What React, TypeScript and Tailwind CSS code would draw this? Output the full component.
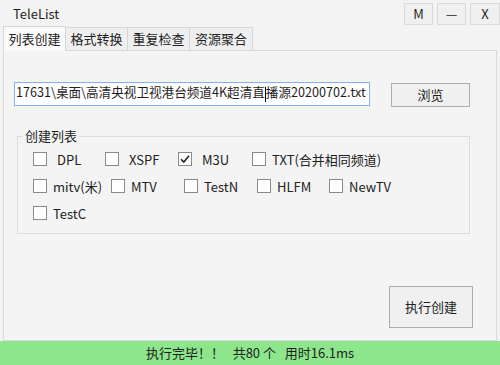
import React from 'react';

const font = { fontFamily: '"Noto Sans CJK SC", "Noto Sans", sans-serif' };

function Box({ checked }: { checked?: boolean }) {
  return (
    <span className="w-[14px] h-[14px] border border-[#8a8a8a] bg-white flex items-center justify-center shrink-0">
      {checked && (
        <svg width="12" height="12" viewBox="0 0 12 12">
          <path d="M2 6.2 L4.8 9 L10 2.8" fill="none" stroke="#222" strokeWidth="1.6" />
        </svg>
      )}
    </span>
  );
}

function Check({ label, w, gap, checked }: { label: string; w: string; gap: string; checked?: boolean }) {
  return (
    <div className={`flex items-center ${w} ${gap}`}>
      <Box checked={checked} />
      <span className="text-[13px] leading-none text-[#222] whitespace-nowrap">{label}</span>
    </div>
  );
}

export default function App() {
  return (
    <div className="w-[500px] h-[365px] bg-[#f3f3f3] flex flex-col overflow-hidden text-[#1e1e1e]" style={font}>
      {/* Title bar */}
      <div className="h-[26px] flex items-start justify-between">
        <span className="pl-[13px] pt-[4px] text-[13px]">TeleList</span>
        <div className="flex gap-[4px] pt-[3px]">
          <div className="w-[29px] h-[22px] border border-[#dadada] bg-[#f0f0f0] flex items-center justify-center text-[13px]">M</div>
          <div className="w-[29px] h-[22px] border border-[#dadada] bg-[#f0f0f0] flex items-center justify-center text-[13px]">—</div>
          <div className="w-[30px] h-[22px] border border-[#dadada] bg-[#f0f0f0] flex items-center justify-center text-[13px]">X</div>
        </div>
      </div>

      {/* Tabs */}
      <div className="flex items-end h-[24px] pl-[3px] relative z-10">
        <div className="w-[63px] h-[25px] bg-[#fafafa] border border-b-0 border-[#d6d6d6] flex items-center justify-center text-[13px] -mb-px">列表创建</div>
        <div className="w-[62px] h-[23px] bg-[#efefef] border border-l-0 border-b-0 border-[#d6d6d6] flex items-center justify-center text-[13px]">格式转换</div>
        <div className="w-[62px] h-[23px] bg-[#efefef] border border-l-0 border-b-0 border-[#d6d6d6] flex items-center justify-center text-[13px]">重复检查</div>
        <div className="w-[63px] h-[23px] bg-[#efefef] border border-l-0 border-b-0 border-[#d6d6d6] flex items-center justify-center text-[13px]">资源聚合</div>
      </div>

      {/* Tab panel */}
      <div className="mx-[3px] h-[291px] border border-[#d9d9d9] bg-[#f4f4f4] flex flex-col">
        <div className="flex items-start mt-[31px] ml-[10px] gap-[21px]">
          <div className="w-[356px] h-[24px] bg-white border border-[#7eb4ea] flex items-center overflow-hidden pl-[1px]">
            <span className="text-[12.6px] whitespace-nowrap leading-none">
              17631\桌面\高清央视卫视港台频道4K超清直<span className="inline-block w-px h-[15px] bg-black align-middle" />播源20200702.txt
            </span>
          </div>
          <div className="w-[79px] h-[24px] border border-[#adadad] bg-[#f0f0f0] flex items-center justify-center text-[13px] mt-px">浏览</div>
        </div>

        {/* Group box */}
        <div className="relative ml-[13px] mt-[29px] w-[453px] h-[98px] border border-[#dcdcdc]">
          <span className="absolute -top-[10px] left-[5px] bg-[#f4f4f4] px-[2px] text-[13px] leading-[18px]">创建列表</span>
          <div className="flex flex-col pt-[15px] pl-[15px] gap-[13px]">
            <div className="flex items-center">
              <Check label="DPL" w="w-[72px]" gap="gap-[10px]" />
              <Check label="XSPF" w="w-[73px]" gap="gap-[10px]" />
              <Check label="M3U" w="w-[74px]" gap="gap-[10px]" checked />
              <Check label="TXT(合并相同频道)" w="w-[140px]" gap="gap-[6px]" />
            </div>
            <div className="flex items-center">
              <Check label="mitv(米)" w="w-[78px]" gap="gap-[6px]" />
              <Check label="MTV" w="w-[73px]" gap="gap-[6px]" />
              <Check label="TestN" w="w-[73px]" gap="gap-[6px]" />
              <Check label="HLFM" w="w-[72px]" gap="gap-[6px]" />
              <Check label="NewTV" w="w-[80px]" gap="gap-[6px]" />
            </div>
            <div className="flex items-center">
              <Check label="TestC" w="w-[80px]" gap="gap-[6px]" />
            </div>
          </div>
        </div>

        <div className="flex justify-end mt-[52px] mr-[23px]">
          <div className="w-[84px] h-[42px] border border-[#adadad] bg-[#f0f0f0] flex items-center justify-center text-[13px]">执行创建</div>
        </div>
      </div>

      {/* Status bar */}
      <div className="mt-auto h-[24px] bg-[#8de68b] flex items-center justify-center text-[13px] whitespace-pre">
        执行完毕！！   共80 个   用时16.1ms
      </div>
    </div>
  );
}
